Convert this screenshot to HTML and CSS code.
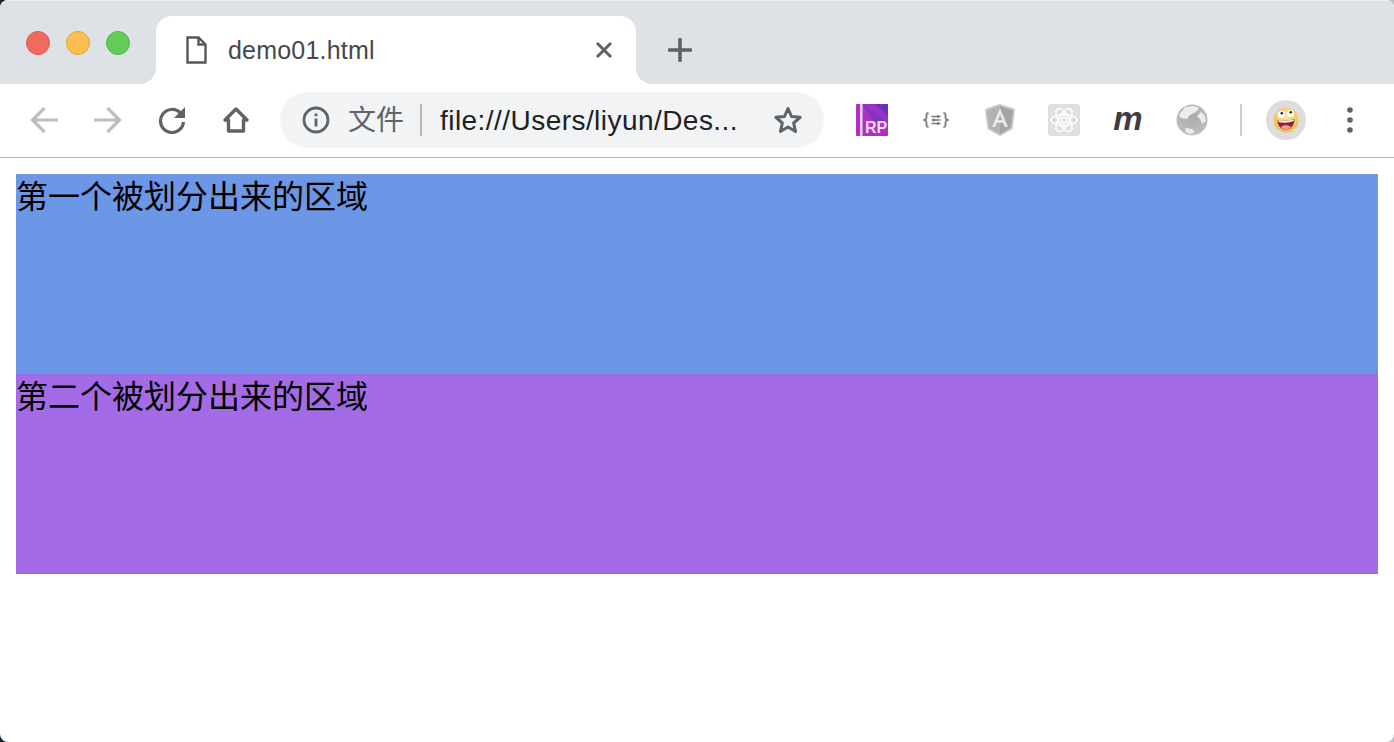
FILE: index.html
```html
<!DOCTYPE html>
<html>
	<head>
		<title>demo01.html</title>
		<link rel="stylesheet" href="styles.css">
	</head>
	<body>
		<div class="window">
			<div class="tabstrip">
				<div class="lights">
					<span class="light red"></span>
					<span class="light yellow"></span>
					<span class="light green"></span>
				</div>
				<div class="tab-slot">
					<div class="tab">
						<svg class="tab-file" width="21" height="28" viewBox="0 0 21 28"><path d="M1.500 1.500h11l7 7v18h-18zM12.500 1.500v7h7" fill="#fff" stroke="#54575b" stroke-width="2.400"/></svg>
						<span class="tab-title">demo01.html</span>
						<svg class="tab-close" width="18" height="18" viewBox="0 0 18 18"><path d="M2 2l14 14M16 2L2 16" stroke="#5f6368" stroke-width="3"/></svg>
					</div>
				</div>
				<div class="strip-rest">
					<svg width="24" height="24" viewBox="0 0 24 24"><path d="M12 1.500v21M1.500 12h21" stroke="#5f6368" stroke-width="3.600" stroke-linecap="round"/></svg>
				</div>
			</div>

			<div class="toolbar">
				<div class="tool"><svg width="28" height="26" viewBox="0 0 28 26"><path d="M27 13H4M13.500 2L2.500 13l11 11" fill="none" stroke="#bdbfc2" stroke-width="3.200" stroke-linecap="round"/></svg></div>
				<div class="tool"><svg width="28" height="26" viewBox="0 0 28 26"><path d="M1 13h23M14.500 2l11 11-11 11" fill="none" stroke="#bdbfc2" stroke-width="3.200" stroke-linecap="round"/></svg></div>
				<div class="tool"><svg width="28" height="28" viewBox="0 0 28 28"><path d="M22.800 7.500A11.500 11.500 0 1 0 25.500 16" fill="none" stroke="#5f6368" stroke-width="3.200"/><path d="M27 1v11H16z" fill="#5f6368"/></svg></div>
				<div class="tool"><svg width="28" height="28" viewBox="0 0 28 28"><path d="M14 3L3 14h3.500v11h15V14H25z" fill="none" stroke="#5f6368" stroke-width="3.400" stroke-linejoin="round"/></svg></div>

				<div class="omnibox">
					<svg class="omni-info" width="28" height="28" viewBox="0 0 28 28"><circle cx="14" cy="14" r="12" fill="none" stroke="#5f6368" stroke-width="2.800"/><path d="M12.600 7.500h2.800v2.800h-2.800zM12.600 12.500h2.800v8h-2.800z" fill="#5f6368"/></svg>
					<span class="omni-label">文件</span>
					<span class="omni-line"></span>
					<span class="omni-url">file:///Users/liyun/Des...</span>
					<svg class="omni-star" width="30" height="30" viewBox="0 0 30 30"><path d="M15 3.500l3.500 8 8.700.8-6.600 5.700 2 8.500-7.600-4.500-7.600 4.500 2-8.500-6.600-5.700 8.700-.8z" fill="none" stroke="#5f6368" stroke-width="3" stroke-linejoin="round"/></svg>
				</div>

				<div class="tool"><svg width="32" height="32" viewBox="0 0 32 32"><rect width="32" height="32" rx="1" fill="#b02fc0"/><path d="M6 0h26v18L19 19z" fill="#7f35c4"/><path d="M6 0h12l14 12v6z" fill="#9a30c6"/><path d="M20 0h12v11z" fill="#6136ad"/><rect x="4" width="2.600" height="32" fill="#eec4f0"/><text class="rp-text" x="9" y="29">RP</text></svg></div>
				<div class="tool"><svg width="26" height="16" viewBox="0 0 26 16"><path d="M5.500 1C3 1 3.500 3 3.500 5.500S3 7 1 8c2 1 2.500 0 2.500 2.500S3 15 5.500 15M20.500 1C23 1 22.500 3 22.500 5.500S23 7 25 8c-2 1-2.500 0-2.500 2.500S23 15 20.500 15" fill="none" stroke="#77797c" stroke-width="1.800"/><path d="M8.500 4.500h9M8.500 8h9M8.500 11.500h9" stroke="#77797c" stroke-width="1.500"/><path d="M15 3v3M11 6.500v3M15 10v3" stroke="#77797c" stroke-width="1.500"/></svg></div>
				<div class="tool"><svg width="30" height="32" viewBox="0 0 30 32"><path d="M15 0L0 5l2.500 20L15 32l12.500-7L30 5z" fill="#c6c6c6"/><path d="M15 2L2 6.500l2.200 17.300L15 30z" fill="#b2b2b2"/><path d="M15 2l13 4.500-2.200 17.300L15 30z" fill="#a4a4a4"/><path d="M15 4L7 23h3.200l1.700-4.300h6.200l1.700 4.300H23zM13 16l2-5 2 5z" fill="#e8e8e8"/></svg></div>
				<div class="tool"><svg width="32" height="32" viewBox="0 0 32 32"><rect width="32" height="32" rx="3" fill="#e0e0e0"/><g fill="none" stroke="#fff" stroke-width="1.500"><ellipse cx="16" cy="16" rx="13" ry="5.500"/><ellipse cx="16" cy="16" rx="13" ry="5.500" transform="rotate(60 16 16)"/><ellipse cx="16" cy="16" rx="13" ry="5.500" transform="rotate(120 16 16)"/><circle cx="16" cy="16" r="3"/></g></svg></div>
				<div class="tool"><span class="ext-m">m</span></div>
				<div class="tool"><svg width="32" height="32" viewBox="0 0 32 32"><defs><radialGradient id="globe" cx="0.5" cy="0.4" r="0.65"><stop offset="0" stop-color="#a9a9a9"/><stop offset="0.8" stop-color="#bcbcbc"/><stop offset="1" stop-color="#d4d4d4"/></radialGradient></defs><circle cx="16" cy="16" r="15.500" fill="url(#globe)"/><path d="M9 3l9-1 5 2-3 4-6 3-3 4-6-1-2-3zM25 8l4 4 1 5-4 3-2-5-3-3zM9 24l7 1 3 3-5 2-4-2z" fill="#ececec"/></svg></div>
				<div class="tool-sep"><span></span></div>
				<div class="tool">
					<div class="avatar">
						<svg width="26" height="26" viewBox="0 0 26 26"><defs><radialGradient id="face" cx="0.5" cy="0.35" r="0.7"><stop offset="0" stop-color="#fbe59a"/><stop offset="1" stop-color="#ecb74a"/></radialGradient></defs><circle cx="13" cy="13" r="12.500" fill="url(#face)"/><circle cx="8.500" cy="7.500" r="3.600" fill="#fff"/><circle cx="17.500" cy="6.500" r="3.600" fill="#fff"/><circle cx="8.800" cy="6.200" r="1.300" fill="#222"/><circle cx="17.800" cy="5.200" r="1.300" fill="#222"/><path d="M4.500 13c5.500 1.500 11.500 1 17-1 0 6-3.500 10.500-8.500 10.500S4.500 19 4.500 13z" fill="#93232b"/><path d="M5.200 13.200c5 1 10.500 1 15.600-.9l-.2 1.800c-5 1.700-10 2-15 .8z" fill="#fff"/><path d="M8 20c2-2.500 7.500-2.500 10 0-2.500 3-7.500 3-10 0z" fill="#ee9aa0"/></svg>
					</div>
				</div>
				<div class="tool"><svg width="6" height="26" viewBox="0 0 6 26"><circle cx="3" cy="3" r="2.800" fill="#5f6368"/><circle cx="3" cy="13" r="2.800" fill="#5f6368"/><circle cx="3" cy="23" r="2.800" fill="#5f6368"/></svg></div>
			</div>

			<div class="page">
				<div class="area area-one">第一个被划分出来的区域</div>
				<div class="area area-two">第二个被划分出来的区域</div>
			</div>
		</div>
	</body>
</html>
```

FILE: styles.css
```css
html {
	background: linear-gradient(to right, #1c2233 50%, #b9bcc2 50%);
}

body {
	margin: 0;
	font-family: "Liberation Sans", "Noto Sans CJK SC", sans-serif;
}

.window {
	height: 742px;
	overflow: hidden;
	border-radius: 8px;
	background-color: white;
}

.tabstrip {
	display: flex;
	height: 84px;
	box-sizing: border-box;
	border-top: 1px solid #eceef1;
}

.lights {
	display: flex;
	align-items: center;
	gap: 16px;
	width: 156px;
	padding: 1px 0 0 26px;
	box-sizing: border-box;
	background-color: #dee1e6;
	border-bottom-right-radius: 16px;
}

.light {
	width: 24px;
	height: 24px;
	box-sizing: border-box;
	border-radius: 50%;
	border: 1px solid;
}

.red {
	background-color: #f1695f;
	border-color: #d85c52;
}
.yellow {
	background-color: #f9c04f;
	border-color: #e0a53c;
}
.green {
	background-color: #63cb58;
	border-color: #53b348;
}

.tab-slot {
	width: 480px;
	padding-top: 15px;
	box-sizing: border-box;
	background-color: #dee1e6;
}

.tab {
	display: flex;
	align-items: center;
	height: 68px;
	padding: 0 23px 0 30px;
	box-sizing: border-box;
	background-color: white;
	border-radius: 16px 16px 0 0;
}

.tab-file {
	margin-right: 21px;
}

.tab-title {
	flex: 1;
	font-size: 25px;
	letter-spacing: 0.2px;
	color: #45484c;
}

.strip-rest {
	flex: 1;
	display: flex;
	align-items: center;
	padding: 14px 0 0 32px;
	background-color: #dee1e6;
	border-bottom-left-radius: 16px;
}

.toolbar {
	display: flex;
	align-items: center;
	height: 74px;
	box-sizing: border-box;
	padding: 0 0 1px 12px;
	border-bottom: 1px solid #b9b9b9;
}

.tool {
	display: flex;
	align-items: center;
	justify-content: center;
	flex: none;
	width: 64px;
}

.omnibox {
	display: flex;
	align-items: center;
	flex: none;
	width: 544px;
	height: 56px;
	margin: 0 16px 0 12px;
	padding-left: 22px;
	box-sizing: border-box;
	border-radius: 28px;
	background-color: #f1f3f4;
}

.omni-label {
	margin-left: 18px;
	padding-top: 2px;
	font-size: 28px;
	line-height: 36px;
	color: #5f6368;
}

.omni-line {
	width: 2px;
	height: 32px;
	margin: 0 18px 0 16px;
	background-color: #b4b6b8;
}

.omni-url {
	width: 333px;
	padding-top: 2px;
	font-size: 28px;
	letter-spacing: 0.45px;
	color: #202124;
	white-space: nowrap;
}

.rp-text {
	font-size: 16px;
	font-weight: bold;
	font-family: "Liberation Sans", sans-serif;
	fill: #f6dcf7;
}

.ext-m {
	font-size: 33px;
	line-height: 32px;
	font-weight: bold;
	font-style: italic;
	color: #3e3e3e;
	padding-bottom: 2px;
}

.tool-sep {
	flex: none;
	display: flex;
	justify-content: center;
	width: 26px;
	padding-left: 4px;
}

.tool-sep span {
	width: 2px;
	height: 32px;
	background-color: #cdcdcd;
}

.avatar {
	display: flex;
	align-items: center;
	justify-content: center;
	width: 40px;
	height: 40px;
	border-radius: 50%;
	background-color: #dddddd;
}

.page {
	padding: 16px;
}

.area {
	height: 200px;
	font-size: 32px;
	line-height: 46px;
	color: black;
}

.area-one {
	background-color: #6c96e6;
}

.area-two {
	background-color: #a46be6;
}
```
